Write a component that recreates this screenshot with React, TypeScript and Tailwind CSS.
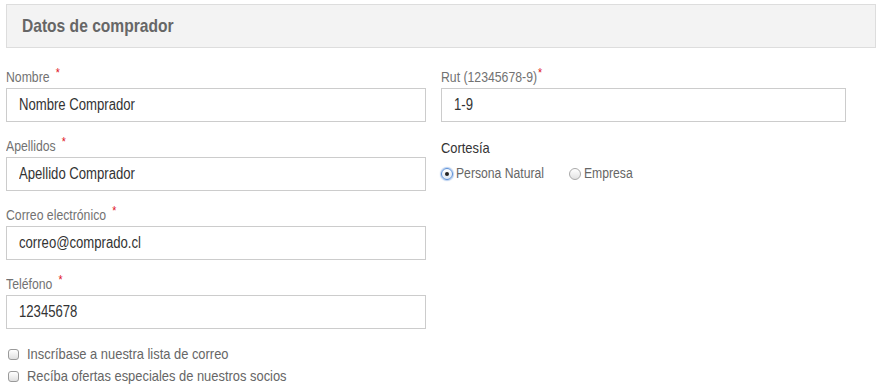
import React from "react";

const F = { fontFamily: '"Liberation Sans", Arial, sans-serif' };

function Label({ text, tight }: { text: string; tight?: boolean }) {
  return (
    <div className="h-[20px] flex items-end text-[14px] leading-[18px] text-[#727272]">
      <span className="inline-block origin-left scale-x-[0.875] whitespace-nowrap">
        {text}
        <span className={`relative top-[-5px] text-[#e0101a] text-[12px] leading-none ${tight ? "ml-[1px]" : "ml-[7px]"}`}>*</span>
      </span>
    </div>
  );
}

function Field({ label, value, width, tight }: { label: string; value: string; width: string; tight?: boolean }) {
  return (
    <div className="flex flex-col">
      <Label text={label} tight={tight} />
      <div className={`mt-[2px] h-[34px] ${width} border border-[#cccccc] bg-white flex items-center pl-[12px] text-[16px] text-[#333333]`}>
        <span className="inline-block origin-left scale-x-[0.82] whitespace-nowrap">{value}</span>
      </div>
    </div>
  );
}

function Radio({ checked, label, width }: { checked?: boolean; label: string; width: string }) {
  return (
    <div className={`flex items-center ${width}`}>
      <span
        className={`w-[12px] h-[12px] rounded-full flex items-center justify-center shrink-0 ${
          checked
            ? "border border-[#5a8fd8] bg-gradient-to-b from-[#ffffff] to-[#dde6f2] shadow-[0_0_1px_1px_rgba(90,143,216,0.45)]"
            : "border border-[#a9a9a9] bg-gradient-to-b from-[#ffffff] to-[#e2e2e2]"
        }`}
      >
        {checked && <span className="w-[4px] h-[4px] rounded-full bg-[#222]" />}
      </span>
      <span className="ml-[3px] text-[14px] text-[#666666] inline-block origin-left scale-x-[0.87] whitespace-nowrap">{label}</span>
    </div>
  );
}

function Check({ label }: { label: string }) {
  return (
    <div className="flex items-center h-[22px]">
      <span className="ml-[2px] w-[11px] h-[11px] shrink-0 rounded-[3px] border border-[#9a9a9a] bg-gradient-to-b from-[#ffffff] to-[#e0e0e0]" />
      <span className="ml-[8px] text-[15px] text-[#666666] inline-block origin-left scale-x-[0.86] whitespace-nowrap">{label}</span>
    </div>
  );
}

export default function App() {
  return (
    <div className="w-[882px] h-[392px] bg-white overflow-hidden px-[6px] pt-[4px]" style={F}>
      <div className="h-[44px] border border-[#dddddd] bg-[#f3f3f3] flex items-center pl-[15px]">
        <span className="text-[19px] font-bold text-[#666666] inline-block origin-left scale-x-[0.82] whitespace-nowrap">
          Datos de comprador
        </span>
      </div>
      <div className="flex mt-[18px]">
        <div className="w-[435px] flex flex-col gap-[13px]">
          <Field label="Nombre" value="Nombre Comprador" width="w-[420px]" />
          <Field label="Apellidos" value="Apellido Comprador" width="w-[420px]" />
          <Field label="Correo electrónico" value="correo@comprado.cl" width="w-[420px]" />
          <Field label="Teléfono" value="12345678" width="w-[420px]" />
        </div>
        <div className="flex flex-col">
          <Field label="Rut (12345678-9)" value="1-9" width="w-[405px]" tight />
          <div className="mt-[16px] text-[15px] text-[#333333] leading-[20px]">
            <span className="inline-block origin-left scale-x-[0.86] whitespace-nowrap">Cortesía</span>
          </div>
          <div className="mt-[5px] flex">
            <Radio checked label="Persona Natural" width="w-[128px]" />
            <Radio label="Empresa" width="w-[100px]" />
          </div>
        </div>
      </div>
      <div className="mt-[14px] flex flex-col">
        <Check label="Inscríbase a nuestra lista de correo" />
        <Check label="Recíba ofertas especiales de nuestros socios" />
      </div>
    </div>
  );
}
